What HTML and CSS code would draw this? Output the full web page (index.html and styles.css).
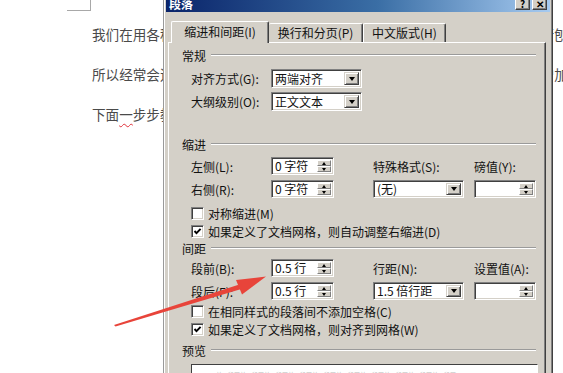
FILE: index.html
```html
<!DOCTYPE html>
<html>
<head>
<meta charset="UTF-8">
<title>段落</title>
<link rel="stylesheet" href="styles.css">
</head>
<body>
	<div class="doc">
		<div class="corner"></div>
		<p>我们在用各种办公软件编辑文档的时候，经常会需要对文档中的段落格式进行刨整。</p>
		<p>所以经常会遇到需要调整段落之间的距离，比如段前段后的间距需要适当地增加。</p>
		<p>下面<span class="typo">一</span>步步教大家如何设置段落间距。</p>
	</div>

	<!-- 段落对话框 -->
	<div class="dlg">
		<div class="titlebar">
			<span class="ttl">段落</span>
			<span class="tbtn">?</span>
			<span class="tbtn">✕</span>
		</div>

		<div class="tabs">
			<div class="tab active">缩进和间距(I)</div>
			<div class="tab">换行和分页(P)</div>
			<div class="tab">中文版式(H)</div>
		</div>

		<div class="panel">
			<div class="gt gt-first"><span>常规</span><i class="ln"></i></div>
			<div class="frow">
				<label>对齐方式(G):</label>
				<div class="combo w91"><span>两端对齐</span><b class="drop"><i></i></b></div>
			</div>
			<div class="frow">
				<label>大纲级别(O):</label>
				<div class="combo w91"><span>正文文本</span><b class="drop"><i></i></b></div>
			</div>

			<div class="gt gt-indent"><span>缩进</span><i class="ln"></i></div>
			<div class="fgrid">
				<label>左侧(L):</label>
				<div class="spin w63"><span>0 字符</span><b class="arrows"><i class="up"></i><i class="dn"></i></b></div>
				<label>特殊格式(S):</label>
				<label>磅值(Y):</label>
				<label>右侧(R):</label>
				<div class="spin w63"><span>0 字符</span><b class="arrows"><i class="up"></i><i class="dn"></i></b></div>
				<div class="combo w91"><span>(无)</span><b class="drop"><i></i></b></div>
				<div class="spin w62"><span></span><b class="arrows"><i class="up"></i><i class="dn"></i></b></div>
			</div>
			<div class="chk chk-first"><span class="box"></span>对称缩进(M)</div>
			<div class="chk"><span class="box"><svg viewBox="0 0 9 9"><path d="M1.5 4 L3.5 6.2 L7.6 1.8"/></svg></span>如果定义了文档网格，则自动调整右缩进(D)</div>

			<div class="gt gt-space"><span>间距</span><i class="ln"></i></div>
			<div class="fgrid fgrid-space">
				<label>段前(B):</label>
				<div class="spin w63"><span>0.5 行</span><b class="arrows"><i class="up"></i><i class="dn"></i></b></div>
				<label>行距(N):</label>
				<label>设置值(A):</label>
				<label>段后(F):</label>
				<div class="spin w63"><span>0.5 行</span><b class="arrows"><i class="up"></i><i class="dn"></i></b></div>
				<div class="combo w91"><span>1.5 倍行距</span><b class="drop"><i></i></b></div>
				<div class="spin w62"><span></span><b class="arrows"><i class="up"></i><i class="dn"></i></b></div>
			</div>
			<div class="chk chk-space"><span class="box"></span>在相同样式的段落间不添加空格(C)</div>
			<div class="chk"><span class="box"><svg viewBox="0 0 9 9"><path d="M1.5 4 L3.5 6.2 L7.6 1.8"/></svg></span>如果定义了文档网格，则对齐到网格(W)</div>

			<div class="gt gt-preview"><span>预览</span><i class="ln"></i></div>
			<div class="preview">
				<div class="pvtext">前一段落前一段落前一段落前一段落前一段落前一段落前一段落前一段落前一段落前一段落</div>
			</div>
		</div>
	</div>

	<!-- 红色箭头 -->
	<svg class="arrow" width="563" height="373" viewBox="0 0 563 373">
		<polygon points="114,325 115.5,326.5 240.5,289.2 238.5,284.8" />
		<polygon points="266,276.5 236,280 242,294.5" />
	</svg>
</body>
</html>
```

FILE: styles.css
```css
* {
	margin: 0;
	padding: 0;
	box-sizing: border-box;
}
body {
	width: 563px;
	height: 373px;
	overflow: hidden;
	background: #fff;
	position: relative;
	font-family: "Noto Sans CJK SC", "Noto Sans", sans-serif;
}

/* 文档 */
.doc {
	white-space: nowrap;
	color: #4a4a4a;
	font-size: 13.6px;
}
.corner {
	width: 24px;
	height: 11px;
	margin-left: 67px;
	border-right: 1px solid #a8a8a8;
	border-bottom: 1px solid #a8a8a8;
}
.doc p {
	padding-left: 92px;
	line-height: 40px;
}
.doc p:first-of-type {
	margin-top: 3px;
}
.typo {
	text-decoration: underline wavy #e0303a;
	text-decoration-thickness: 1px;
	text-underline-offset: 3px;
}

/* 对话框 */
.dlg {
	position: absolute;
	left: 163px;
	top: -8px;
	width: 390px;
	height: 400px;
	background: #d4d0c8;
	border: 1px solid;
	border-color: #d4d0c8 #404040 #404040 #9a9a9a;
	box-shadow: inset 1px 1px #fff, inset -1px -1px #808080;
	padding: 2px;
	font-size: 12px;
	color: #111;
}
.titlebar {
	height: 17px;
	display: flex;
	align-items: center;
	padding: 0 3px;
	background: linear-gradient(to right, #0a246a, #3a6ea5 55%, #a6caf0);
}
.ttl {
	flex: 1;
	color: #fff;
	font-weight: bold;
	font-size: 12px;
	line-height: 17px;
}
.tbtn {
	width: 15px;
	height: 13px;
	margin-left: 2px;
	background: #d4d0c8;
	border: 1px solid;
	border-color: #fff #404040 #404040 #fff;
	box-shadow: inset -1px -1px #808080;
	font-size: 10px;
	font-weight: bold;
	line-height: 11px;
	text-align: center;
	color: #000;
}

/* 选项卡 */
.tabs {
	display: flex;
	align-items: flex-end;
	height: 22px;
	margin-top: 8px;
	padding-left: 5px;
	position: relative;
	z-index: 2;
}
.tab {
	height: 19px;
	line-height: 18px;
	text-align: center;
	border-top: 1px solid #fff;
	border-left: 1px solid #fff;
	border-right: 1px solid #404040;
	box-shadow: inset -1px 0 #808080;
	border-radius: 2px 2px 0 0;
	background: #d4d0c8;
}
.tab:nth-child(2) {
	width: 94px;
	border-left: none;
}
.tab:nth-child(3) {
	width: 83px;
}
.tab.active {
	width: 98px;
	height: 22px;
	line-height: 19px;
	margin-bottom: -1px;
}

.panel {
	margin-left: 2px;
	width: 378px;
	height: 360px;
	border: 1px solid;
	border-color: #fff #404040 #404040 #fff;
	box-shadow: inset -1px -1px #808080;
	padding: 0 9px 0 13px;
}

/* 分组标题 */
.gt {
	display: flex;
	align-items: center;
	height: 24px;
}
.gt .ln {
	flex: 1;
	margin-left: 5px;
	border-top: 1px solid #9a9a9a;
	border-bottom: 1px solid #fff;
}
.gt-indent {
	margin-top: 19px;
}
.gt-space {
	height: 16px;
}

.frow {
	display: flex;
	align-items: center;
	height: 23px;
	padding-left: 9px;
}
.frow label {
	width: 80px;
}

.fgrid {
	display: grid;
	grid-template-columns: 80px 102px 101px 62px;
	grid-template-rows: 18px 18px;
	row-gap: 5px;
	align-items: center;
	padding-left: 9px;
	margin-top: 1px;
}
.fgrid-space {
	margin-top: 3px;
}

/* 凹陷输入框 */
.combo, .spin {
	display: flex;
	align-items: center;
	height: 18px;
	background: #fff;
	border: 1px solid;
	border-color: #808080 #fff #fff #808080;
	box-shadow: inset 1px 1px #404040, inset -1px -1px #d4d0c8;
	padding: 2px;
}
.combo span, .spin span {
	flex: 1;
	line-height: 14px;
	white-space: nowrap;
	padding-left: 1px;
}
.frow .combo {
	height: 19px;
}
.w91 { width: 91px; }
.w63 { width: 63px; }
.w62 { width: 62px; }

.drop {
	width: 15px;
	align-self: stretch;
	display: flex;
	align-items: center;
	justify-content: center;
	background: #d4d0c8;
	border: 1px solid;
	border-color: #d4d0c8 #404040 #404040 #d4d0c8;
	box-shadow: inset 1px 1px #fff, inset -1px -1px #808080;
}
.drop i {
	width: 0;
	height: 0;
	border-left: 3.5px solid transparent;
	border-right: 3.5px solid transparent;
	border-top: 4px solid #000;
}

.arrows {
	width: 14px;
	align-self: stretch;
	display: flex;
	flex-direction: column;
}
.arrows i {
	flex: 1;
	display: flex;
	align-items: center;
	justify-content: center;
	background: #d4d0c8;
	border: 1px solid;
	border-color: #fff #808080 #808080 #fff;
}
.arrows i::after {
	content: "";
	width: 0;
	height: 0;
	border-left: 2.5px solid transparent;
	border-right: 2.5px solid transparent;
}
.arrows .up::after {
	border-bottom: 3px solid #000;
}
.arrows .dn::after {
	border-top: 3px solid #000;
}

/* 复选框 */
.chk {
	display: flex;
	align-items: center;
	height: 18px;
	padding-left: 9px;
}
.chk-first {
	margin-top: 6px;
}
.chk-space {
	margin-top: 2px;
}
.box {
	width: 13px;
	height: 13px;
	margin-right: 4px;
	background: #fff;
	border: 1px solid;
	border-color: #808080 #fff #fff #808080;
	box-shadow: inset 1px 1px #404040, inset -1px -1px #d4d0c8;
	display: flex;
	align-items: center;
	justify-content: center;
}
.box svg {
	width: 9px;
	height: 9px;
}
.box path {
	fill: none;
	stroke: #000;
	stroke-width: 1.9;
}

.gt-preview {
	height: 24px;
}
.preview {
	margin: 2px 0 0 9px;
	width: 347px;
	height: 60px;
	background: #fff;
	border: 1px solid;
	border-color: #404040 #fff #fff #404040;
	padding: 5px 0 0 24px;
}
.pvtext {
	font-size: 6px;
	color: #c4c4c4;
	white-space: nowrap;
}

/* 箭头 */
.arrow {
	position: absolute;
	left: 0;
	top: 0;
	pointer-events: none;
}
.arrow polygon {
	fill: #e8443a;
}
```
